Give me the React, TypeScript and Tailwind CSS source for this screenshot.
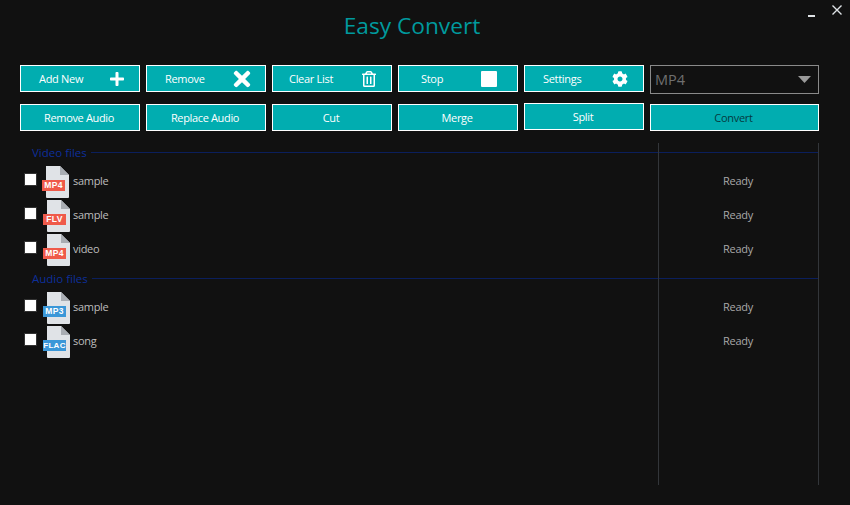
import { FaPlus, FaTimes, FaRegTrashAlt, FaCog } from "react-icons/fa";
import type { ReactNode } from "react";

const font = { fontFamily: '"Open Sans", "Noto Sans", sans-serif' };

function IconButton({ label, pad, iconBox, children }: { label: string; pad: string; iconBox: string; children: ReactNode }) {
  return (
    <button className="w-[120px] h-[27px] shrink-0 flex items-center border border-white bg-[#01adb0] text-white text-[11px] tracking-[-0.3px]">
      <span className={`flex-1 text-left pt-px ${pad}`}>{label}</span>
      <span className={`w-[32px] flex justify-center text-white ${iconBox}`}>{children}</span>
    </button>
  );
}

function TextButton({ label, extra = "" }: { label: string; extra?: string }) {
  return (
    <button className={`w-[120px] h-[27px] shrink-0 pt-px pr-[2px] border border-white bg-[#01adb0] text-white text-[11px] tracking-[-0.35px] ${extra}`}>
      {label}
    </button>
  );
}

function FileIcon({ ext, color, shift }: { ext: string; color: string; shift: number }) {
  return (
    <svg width="28" height="34" viewBox="0 0 28 34" className="shrink-0">
      <g transform={`translate(${shift} 0)`}>
        <path d="M4 2H18L27 11V33a1 1 0 0 1-1 1H5a1 1 0 0 1-1-1z" fill="#e0e3e7" />
        <path d="M18 2L27 11H18z" fill="#a9adb3" />
        <rect x="0" y="16" width="23" height="11" fill={color} />
        <text
          x="11.5"
          y="24"
          textAnchor="middle"
          fontSize={ext === "FLAC" ? 8 : 8.5}
          fontWeight="700"
          letterSpacing="0.3"
          fill="#ffffff"
          fontFamily='"Liberation Sans", sans-serif'
        >
          {ext}
        </text>
      </g>
    </svg>
  );
}

function FileRow({ name, ext, color, shift = 0 }: { name: string; ext: string; color: string; shift?: number }) {
  return (
    <div className="h-[34px] flex items-center text-[11px] tracking-[-0.3px]">
      <span className="ml-[4px] mb-[3px] w-[13px] h-[13px] bg-white border border-[#333333] shrink-0" />
      <span className="ml-[5px] flex">
        <FileIcon ext={ext} color={color} shift={shift} />
      </span>
      <span className="ml-[3px] w-[586px] text-[#bdbdbd]">{name}</span>
      <span className="w-[158px] text-center text-[#a8a8a8]">Ready</span>
    </div>
  );
}

function GroupHeader({ label, text = "", line = "" }: { label: string; text?: string; line?: string }) {
  return (
    <div className="h-[20px] flex items-center pl-[12px] gap-[4px]">
      <span className={`text-[11.5px] text-[#0d2f9a] leading-none ${text}`}>{label}</span>
      <span className={`flex-1 h-px bg-[#0b1f5c] ${line}`} />
    </div>
  );
}

export default function App() {
  return (
    <div className="relative w-[850px] h-[505px] bg-[#111111] overflow-hidden" style={font}>
      <div className="absolute top-[5px] right-[8px] flex items-start gap-[17px]">
        <svg width="7" height="10" viewBox="0 0 7 10" className="mt-[3px]">
          <rect x="0" y="7" width="7" height="2" fill="#dfe3e6" />
        </svg>
        <svg width="10" height="10" viewBox="0 0 10 10">
          <path d="M0.5 0.5L9.5 9.5M9.5 0.5L0.5 9.5" stroke="#dfe3e6" strokeWidth="1.4" />
        </svg>
      </div>

      <div className="h-[52px] pr-[26px] flex items-center justify-center text-[22.7px] text-[#009a9e]">Easy Convert</div>

      <div className="mt-[13px] px-[20px]">
        <div className="h-[27px] flex items-start gap-[6px]">
          <IconButton label="Add New" pad="pl-[18px]" iconBox="mr-[6px]">
            <FaPlus size={16} />
          </IconButton>
          <IconButton label="Remove" pad="pl-[18px]" iconBox="mr-[7px]">
            <FaTimes size={24} />
          </IconButton>
          <IconButton label="Clear List" pad="pl-[16px]" iconBox="mr-[6px]">
            <FaRegTrashAlt size={16} />
          </IconButton>
          <IconButton label="Stop" pad="pl-[22px]" iconBox="mr-[12px]">
            <span className="block w-[16px] h-[16px] bg-white rounded-[1px]" />
          </IconButton>
          <IconButton label="Settings" pad="pl-[18px]" iconBox="mr-[7px]">
            <FaCog size={16} />
          </IconButton>
          <div className="w-[169px] h-[29px] shrink-0 flex items-center justify-between border border-[#8a8a8a] pl-[4px] pr-[7px] text-[14.5px] text-[#6f6f6f]">
            <span>MP4</span>
            <svg width="13" height="7" viewBox="0 0 13 7">
              <path d="M0 0H13L6.5 7z" fill="#9a9a9a" />
            </svg>
          </div>
        </div>

        <div className="mt-[12px] h-[27px] flex items-start gap-[6px]">
          <TextButton label="Remove Audio" />
          <TextButton label="Replace Audio" />
          <TextButton label="Cut" />
          <TextButton label="Merge" />
          <TextButton label="Split" extra="-translate-y-px" />
          <button className="w-[169px] h-[27px] shrink-0 pt-px pr-[2px] border border-white bg-[#01adb0] text-[#053a40] text-[11px] tracking-[-0.3px]">
            Convert
          </button>
        </div>

        <div className="relative mt-[12px] w-[799px] h-[342px] border-r border-[#33363a]">
          <span className="absolute left-[638px] top-0 bottom-0 w-px bg-[#33363a]" />
          <GroupHeader label="Video files" line="mb-[2px]" />
          <div className="mt-px">
            <FileRow name="sample" ext="MP4" color="#ef5a4a" />
            <FileRow name="sample" ext="FLV" color="#ef5a4a" shift={1} />
            <FileRow name="video" ext="MP4" color="#ef5a4a" shift={1} />
          </div>
          <div className="mt-[2px]">
            <GroupHeader label="Audio files" text="pt-[2px]" />
          </div>
          <div className="mt-[2px]">
            <FileRow name="sample" ext="MP3" color="#3a97d8" shift={1} />
            <FileRow name="song" ext="FLAC" color="#3a97d8" shift={1} />
          </div>
        </div>
      </div>
    </div>
  );
}
